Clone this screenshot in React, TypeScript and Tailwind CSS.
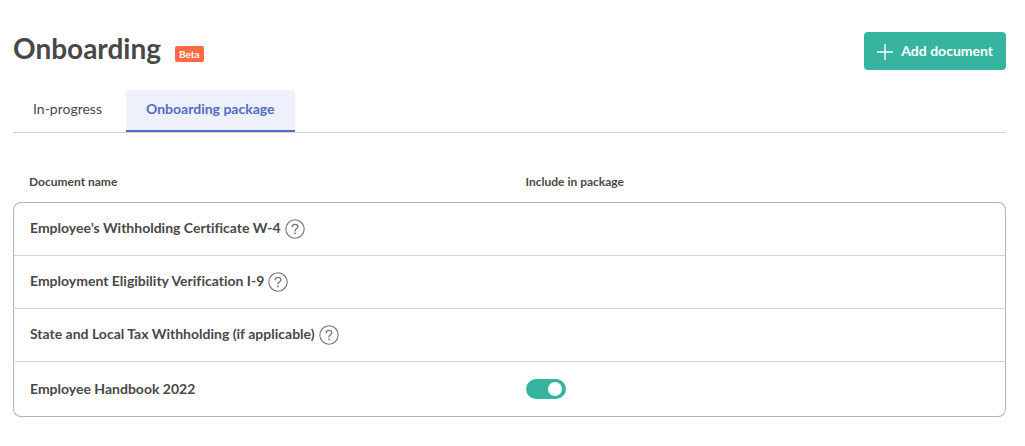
import { clsx } from "clsx"

interface OnboardingDocument {
  name: string
  hasHelp: boolean
  included?: boolean
}

const tabs = [
  { label: "In-progress", href: "#in-progress", active: false },
  { label: "Onboarding package", href: "#onboarding-package", active: true },
]

const documents: OnboardingDocument[] = [
  { name: "Employee’s Withholding Certificate W-4", hasHelp: true },
  { name: "Employment Eligibility Verification I-9", hasHelp: true },
  { name: "State and Local Tax Withholding (if applicable)", hasHelp: true },
  { name: "Employee Handbook 2022", hasHelp: false, included: true },
]

const PlusIcon = () => (
  <svg className="mt-0.5 size-4" viewBox="0 0 16 16" fill="none" stroke="currentColor" strokeWidth="1.4" aria-hidden="true">
    <path d="M8 0v16M0 8h16" />
  </svg>
)

const HelpIcon = () => (
  <svg className="size-5" viewBox="0 0 20 20" fill="none" stroke="currentColor" strokeWidth="1.1" aria-hidden="true">
    <circle cx="10" cy="10" r="9.2" />
    <path d="M7.2 7.800c0-1.600 1.200-2.500 2.800-2.500s2.900.9 2.900 2.400c0 2-2.900 2.100-2.900 4.300" strokeWidth="1.3" strokeLinecap="round" />
    <circle cx="10" cy="14.400" r="0.900" fill="currentColor" stroke="none" />
  </svg>
)

const Toggle: React.FC<{ label: string; defaultChecked: boolean }> = ({
  label,
  defaultChecked,
}) => (
  <input
    type="checkbox"
    role="switch"
    aria-label={label}
    defaultChecked={defaultChecked}
    className="block h-5 w-10 cursor-pointer appearance-none rounded-full bg-gray-300 px-1 py-[3px] before:block before:size-[14px] before:rounded-full before:bg-white checked:bg-[#35b5a0] checked:before:ml-auto"
  />
)

const DocumentRow: React.FC<{ document: OnboardingDocument }> = ({
  document,
}) => (
  <tr className="group">
    <td className="border-b border-l border-b-[#d4d4d4] border-l-[#b3b3b3] px-4 py-4 group-first:rounded-tl-lg group-first:border-t group-first:border-t-[#b3b3b3] group-last:rounded-bl-lg group-last:border-b-[#b3b3b3] group-last:py-[18px]">
      <div className="flex items-start gap-1 text-sm leading-[18px] font-bold [font-variant-ligatures:none]">
        <span>{document.name}</span>
        {document.hasHelp && (
          <button type="button" aria-label={`About ${document.name}`} className="text-[#777777]">
            <HelpIcon />
          </button>
        )}
      </div>
    </td>
    <td className="border-r border-b border-r-[#b3b3b3] border-b-[#d4d4d4] px-4 group-first:rounded-tr-lg group-first:border-t group-first:border-t-[#b3b3b3] group-last:rounded-br-lg group-last:border-b-[#b3b3b3]">
      {document.included !== undefined && (
        <Toggle
          label={`Include ${document.name} in package`}
          defaultChecked={document.included}
        />
      )}
    </td>
  </tr>
)

export default function App() {
  return (
    <main className="bg-white pt-8 pr-[19px] pb-7 pl-[13px] font-[Lato,sans-serif] text-[#484848]">
      <header className="flex items-start justify-between">
        <div className="flex items-center gap-[14px]">
          <h1 className="text-[28px] leading-8 font-bold">Onboarding</h1>
          <span className="mt-3 rounded-xs bg-[#fd6a42] px-1 text-[10px] leading-4 font-bold text-white">
            Beta
          </span>
        </div>
        <button
          type="button"
          className="flex h-[38px] items-center gap-2 rounded bg-[#35b5a0] px-[13px] text-sm font-bold text-white"
        >
          <PlusIcon />
          Add document
        </button>
      </header>

      <nav className="mt-5 flex gap-1 border-b border-[#d4d4d4]">
        {tabs.map((tab) => (
          <a
            key={tab.href}
            href={tab.href}
            aria-current={tab.active ? "page" : undefined}
            className={clsx(
              "h-[42px] rounded-t border-b-2 px-5 text-sm leading-[38px]",
              tab.active
                ? "border-[#526cbf] bg-[#eef0fb] font-bold text-[#526cbf]"
                : "border-transparent"
            )}
          >
            {tab.label}
          </a>
        ))}
      </nav>

      <table className="mt-10 w-full table-fixed border-separate border-spacing-0 text-left">
        <thead className="text-xs leading-[18px]">
          <tr>
            <th scope="col" className="px-4 pb-[11px] font-bold">Document name</th>
            <th scope="col" className="px-4 pb-[11px] font-bold">Include in package</th>
          </tr>
        </thead>
        <tbody>
          {documents.map((document) => (
            <DocumentRow key={document.name} document={document} />
          ))}
        </tbody>
      </table>
    </main>
  )
}
